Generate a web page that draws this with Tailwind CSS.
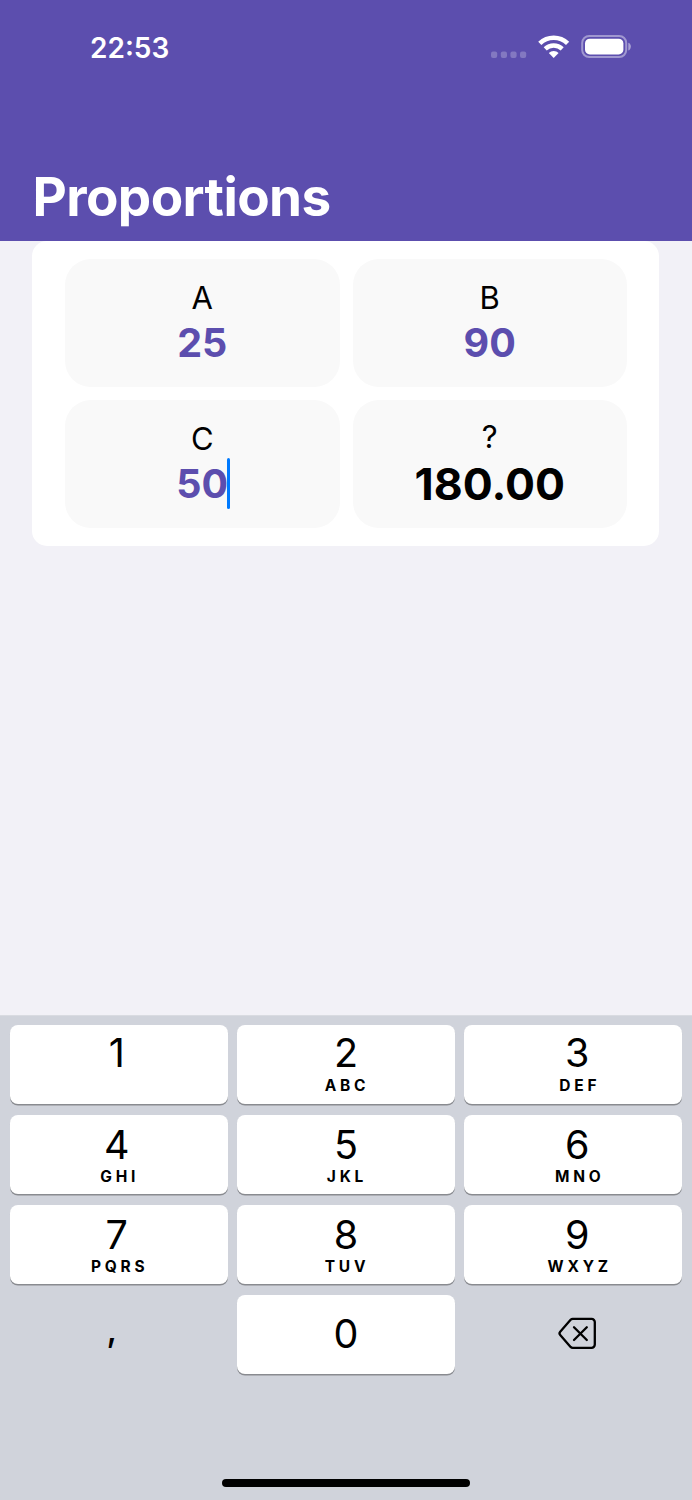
<!DOCTYPE html>
<html lang="en">
<head>
  <meta charset="UTF-8" />
  <meta name="viewport" content="width=device-width, initial-scale=1" />
  <title>Proportions</title>
  <script src="https://cdn.jsdelivr.net/npm/@tailwindcss/browser@4"></script>
</head>
<body class="bg-[#f2f1f7] font-['Inter',sans-serif] text-black">
  <div class="flex flex-col w-[692px] h-[1500px] overflow-hidden">

    <!-- Header -->
    <header class="flex flex-col justify-between h-[241px] shrink-0 bg-[#5c4eae] text-white pt-[27px] pb-5">
      <div class="flex items-center justify-between h-10 pl-[90px] pr-[60px]">
        <span class="pt-0.5 text-[28px] leading-10 font-semibold">22:53</span>
        <svg class="w-[142px] h-10" viewBox="490 27 142 40" fill="none">
          <g fill="#fff" fill-opacity=".24">
            <rect x="491" y="51.5" width="6.2" height="6.5" rx="2" />
            <rect x="500.8" y="51.5" width="6.2" height="6.5" rx="2" />
            <rect x="510.4" y="51.5" width="6.2" height="6.5" rx="2" />
            <rect x="520" y="51.5" width="6.2" height="6.5" rx="2" />
          </g>
          <path d="M539.8 43.4a20 20 0 0 1 27.8 0" stroke="#fff" stroke-width="4.6" />
          <path d="M545.2 48.9a12.4 12.4 0 0 1 17 0" stroke="#fff" stroke-width="4.4" />
          <path d="M553.7 58l-4.9-4.9a7 7 0 0 1 9.8 0z" fill="#fff" />
          <rect x="582.2" y="36" width="44" height="21" rx="7" stroke="#fff" stroke-opacity=".42" stroke-width="2" />
          <rect x="585" y="38.7" width="38.4" height="15.8" rx="4.8" fill="#fff" />
          <path d="M628.3 42.8c3.4 1 3.4 6.6 0 7.8z" fill="#fff" fill-opacity=".48" />
        </svg>
      </div>
      <h1 class="pl-[32.5px] text-[53px] leading-[48px] font-bold tracking-[-0.6px]">Proportions</h1>
    </header>

    <!-- Proportion fields -->
    <main class="flex-1 pl-8 pr-[33px]">
      <div class="grid grid-cols-2 gap-[13px] bg-white rounded-[15px] pl-[33px] pr-8 py-[18px] text-center">
        <div class="h-32 pt-[19px] rounded-[26px] bg-[#f9f9f9]">
          <div class="text-[31px] leading-10">A</div>
          <div class="text-[39.5px] leading-[51px] font-bold text-[#5c4eae]">25</div>
        </div>
        <div class="h-32 pt-[19px] rounded-[26px] bg-[#f9f9f9]">
          <div class="text-[31px] leading-10">B</div>
          <div class="text-[39.5px] leading-[51px] font-bold text-[#5c4eae]">90</div>
        </div>
        <div class="h-32 pt-[19px] rounded-[26px] bg-[#f9f9f9]">
          <div class="text-[31px] leading-10">C</div>
          <div class="text-[39.5px] leading-[51px] font-bold text-[#5c4eae]">
            <span class="relative">50<i class="absolute -right-[2px] top-[-2px] w-[3.5px] h-[51px] rounded-full bg-[#007aff]"></i></span>
          </div>
        </div>
        <div class="h-32 pt-[17px] rounded-[26px] bg-[#f9f9f9]">
          <div class="text-[31px] leading-10">?</div>
          <div class="text-[44.5px] leading-[55px] font-bold">180.00</div>
        </div>
      </div>
    </main>

    <!-- Number pad -->
    <section class="flex flex-col justify-between h-[485px] shrink-0 bg-[#d0d3db] border-t border-[#d9dbe1] pt-[9px] pb-[13px]">
      <div class="grid grid-cols-3 gap-x-[9.5px] gap-y-[11px] px-[9.8px] text-center text-[39.5px]">
        <div class="h-[79px] pt-2 pr-1 rounded-lg bg-white shadow-[0_1.5px_0_#898b90]">
          <div class="leading-10">1</div>
        </div>
        <div class="h-[79px] pt-2 rounded-lg bg-white shadow-[0_1.5px_0_#898b90]">
          <div class="leading-10">2</div>
          <div class="text-[15.5px] leading-[26px] font-bold tracking-[3.8px] pl-0.5">ABC</div>
        </div>
        <div class="h-[79px] pt-2 pl-2 rounded-lg bg-white shadow-[0_1.5px_0_#898b90]">
          <div class="leading-10">3</div>
          <div class="text-[15.5px] leading-[26px] font-bold tracking-[3.8px] pl-[5px]">DEF</div>
        </div>

        <div class="h-[79px] pt-[10px] pr-1 rounded-lg bg-white shadow-[0_1.5px_0_#898b90]">
          <div class="leading-10">4</div>
          <div class="text-[15.5px] leading-6 font-bold tracking-[3.8px] pl-[6px]">GHI</div>
        </div>
        <div class="h-[79px] pt-[10px] rounded-lg bg-white shadow-[0_1.5px_0_#898b90]">
          <div class="leading-10">5</div>
          <div class="text-[15.5px] leading-6 font-bold tracking-[3.8px] pl-0.5">JKL</div>
        </div>
        <div class="h-[79px] pt-[10px] pl-2 rounded-lg bg-white shadow-[0_1.5px_0_#898b90]">
          <div class="leading-10">6</div>
          <div class="text-[15.5px] leading-6 font-bold tracking-[3.8px] pl-[5px]">MNO</div>
        </div>

        <div class="h-[79px] pt-[10px] pr-1 rounded-lg bg-white shadow-[0_1.5px_0_#898b90]">
          <div class="leading-10">7</div>
          <div class="text-[15.5px] leading-6 font-bold tracking-[3.8px] pl-[6px]">PQRS</div>
        </div>
        <div class="h-[79px] pt-[10px] rounded-lg bg-white shadow-[0_1.5px_0_#898b90]">
          <div class="leading-10">8</div>
          <div class="text-[15.5px] leading-6 font-bold tracking-[3.8px] pl-0.5">TUV</div>
        </div>
        <div class="h-[79px] pt-[10px] pl-2 rounded-lg bg-white shadow-[0_1.5px_0_#898b90]">
          <div class="leading-10">9</div>
          <div class="text-[15.5px] leading-6 font-bold tracking-[3.8px] pl-[5px]">WXYZ</div>
        </div>

        <div class="h-[79px] pt-[14px] pr-[14px]">
          <div class="text-[35px] leading-10 font-medium">,</div>
        </div>
        <div class="h-[79px] pt-[18px] rounded-lg bg-white shadow-[0_1.5px_0_#898b90]">
          <div class="leading-[42px]">0</div>
        </div>
        <div class="h-[79px] pt-[21px] pl-[93px]">
          <svg class="w-10 h-9" viewBox="0 0 40 36" fill="none" stroke="#000" stroke-width="2.3" stroke-linecap="round" stroke-linejoin="round">
            <path d="M15.8 2.9H34.6a3.2 3.2 0 0 1 3.2 3.2V28.6a3.2 3.2 0 0 1-3.2 3.2H15.8a3 3 0 0 1-2.2-.9L3.2 19a2.4 2.4 0 0 1 0-3.2L13.6 3.8a3 3 0 0 1 2.2-.9z" />
            <path d="M17 11.2l12.8 12.8M29.8 11.2L17 24" />
          </svg>
        </div>
      </div>
      <div class="self-center w-[248px] h-2 rounded-full bg-black"></div>
    </section>

  </div>
</body>
</html>
